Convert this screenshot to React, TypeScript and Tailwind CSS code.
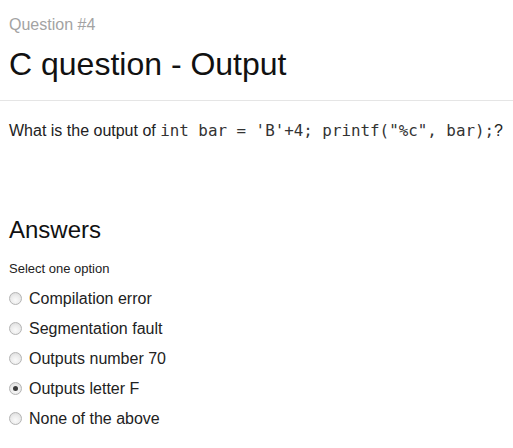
import React from "react";

const options = [
  { label: "Compilation error", checked: false },
  { label: "Segmentation fault", checked: false },
  { label: "Outputs number 70", checked: false },
  { label: "Outputs letter F", checked: true },
  { label: "None of the above", checked: false },
];

function Radio({ checked }: { checked: boolean }) {
  return (
    <span className="mt-[8px] mr-[7px] flex h-[13px] w-[13px] shrink-0 items-center justify-center rounded-full border border-[#b4b4b4] bg-[radial-gradient(circle_at_50%_65%,#fafafa_0%,#ececec_50%,#d6d6d6_100%)]">
      {checked && <span className="h-[5px] w-[5px] rounded-full bg-[#3a3a3a]" />}
    </span>
  );
}

export default function App() {
  return (
    <div className="min-h-[448px] w-[513px] bg-white font-['Liberation_Sans',Arial,sans-serif] text-[#333]">
      <div className="px-[9px] pt-[13px]">
        <div className="text-[16px] leading-[24px] text-[#a3a3a3]">Question #4</div>
        <h1 className="mt-[7px] text-[32px] leading-[40px] text-[#111]">C question - Output</h1>
      </div>
      <div className="mt-[16px] h-px w-full bg-[#e5e5e5]" />
      <div className="px-[9px]">
        <p className="mt-[18px] whitespace-nowrap text-[16px] leading-[24px] text-[#222]">
          What is the output of{" "}
          <code className="font-['DejaVu_Sans_Mono',monospace] text-[15.85px] text-[#333]">
            int bar = 'B'+4; printf("%c", bar);
          </code>
          ?
        </p>
        <h2 className="mt-[71px] text-[24px] leading-[32px] text-[#111]">Answers</h2>
        <div className="mt-[13px] text-[13px] leading-[20px] text-[#222]">Select one option</div>
        <div className="mt-[5px] flex flex-col">
          {options.map((o) => (
            <label key={o.label} className="flex h-[30px] items-start">
              <Radio checked={o.checked} />
              <span className="text-[16px] leading-[30px] text-[#222]">{o.label}</span>
            </label>
          ))}
        </div>
      </div>
    </div>
  );
}
